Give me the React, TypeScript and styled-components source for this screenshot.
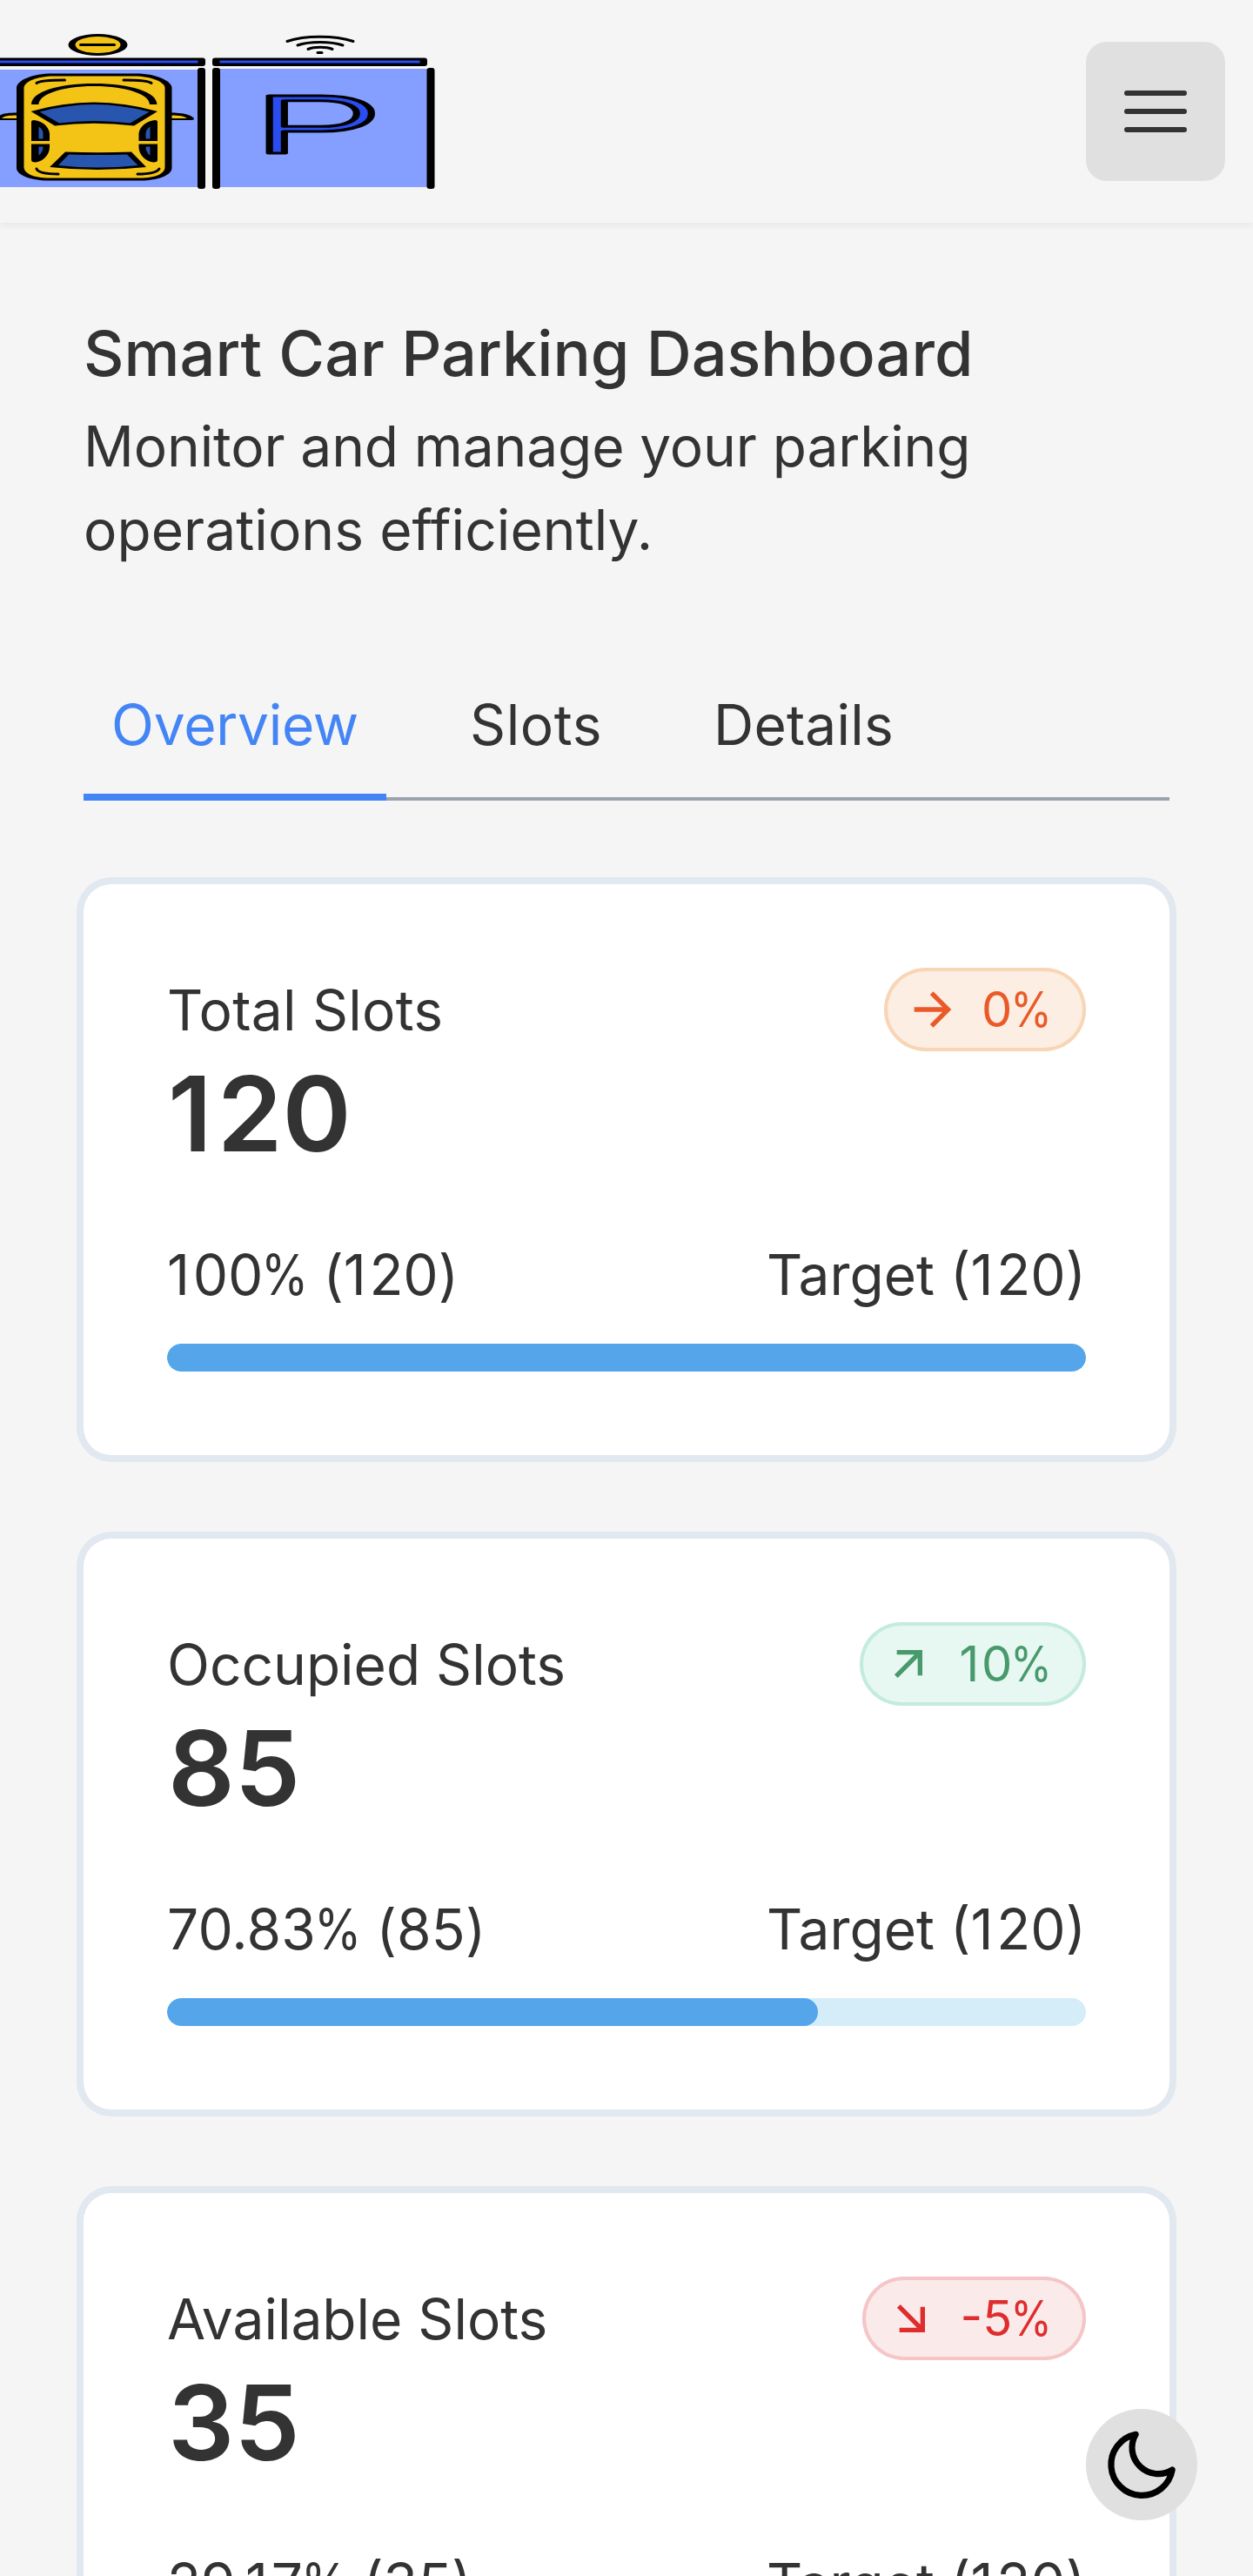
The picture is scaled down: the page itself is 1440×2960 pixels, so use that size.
import React from "react";
import styled, { createGlobalStyle } from "styled-components";

const GlobalStyle = createGlobalStyle`
  *, *::before, *::after { box-sizing: border-box; }
  body { margin: 0; background: #f5f5f5; color: #333333; font-family: Inter, sans-serif; font-size: 64px; line-height: 96px; }
  h1, p, button { margin: 0; padding: 0; font: inherit; color: inherit; }
  button { border: 0; background: none; }
`;

const Page = styled.div`
  height: 2960px;
  overflow: hidden;
`;

const Header = styled.header`
  display: flex;
  align-items: center;
  justify-content: space-between;
  height: 256px;
  padding-right: 32px;
  box-shadow: 0 4px 8px rgba(0, 0, 0, 0.05);
`;

const Logo = styled.svg`
  display: block;
  width: 520px;
  height: 256px;
`;

const LogoLetter = styled.text`
  font-family: Inter, sans-serif;
  font-size: 91px;
  font-weight: 300;
  fill: #2a4df2;
  stroke: #000000;
  stroke-width: 3px;
  stroke-linejoin: round;
`;

const MenuButton = styled.button`
  display: flex;
  align-items: center;
  justify-content: center;
  width: 160px;
  height: 160px;
  border-radius: 24px;
  background: #e0e0e0;
`;

const MenuIcon = styled.svg`
  width: 96px;
  height: 96px;
  fill: none;
  stroke: #333333;
  stroke-width: 1.5;
  stroke-linecap: round;
`;

const Main = styled.main`
  padding: 96px;
`;

const Title = styled.h1`
  font-size: 72px;
  line-height: 108px;
  font-weight: 500;
  letter-spacing: 0.03px;
  margin-bottom: 4px;
`;

const BodyText = styled.p`
  padding-top: 1px;
  margin-bottom: -1px;
`;

const Subtitle = styled(BodyText)`
  letter-spacing: 0.08px;

  &::first-line {
    letter-spacing: -0.12px;
  }
`;

const Tabs = styled.nav`
  display: flex;
  gap: 64px;
  height: 168px;
  margin: 96px 0;
  box-shadow: inset 0 -4px 0 #9ca3af;
`;

const Tab = styled.button<{ $active?: boolean; $tracking: number }>`
  padding: 33px 32px 31px;
  border-bottom: 8px solid ${(p) => (p.$active ? "#4485f6" : "transparent")};
  color: ${(p) => (p.$active ? "#4485f6" : "#333333")};
  letter-spacing: ${(p) => p.$tracking}px;
`;

const Cards = styled.section`
  display: flex;
  flex-direction: column;
  gap: 96px;
`;

const Card = styled.article`
  padding: 96px;
  border-radius: 32px;
  background: #ffffff;
  box-shadow: 0 0 0 8px #e1e8f0;
`;

const Row = styled.div`
  display: flex;
  align-items: center;
  justify-content: space-between;
`;

const Label = styled(BodyText)<{ $tracking?: number }>`
  white-space: pre;
  letter-spacing: ${(p) => p.$tracking ?? 0}px;
`;

const Value = styled.p`
  font-size: 120px;
  line-height: 144px;
  font-weight: 600;
  padding-left: 1px;
  margin-bottom: 64px;
`;

type Tone = "flat" | "up" | "down";

const tones: Record<Tone, { text: string; fill: string; ring: string; path: string }> = {
  flat: {
    text: "#ea5a28",
    fill: "#fceee2",
    ring: "#f8d5b6",
    path: "M16.172 11L10.808 5.636L12.222 4.222L20 12L12.222 19.778L10.808 18.364L16.172 13H4V11H16.172Z",
  },
  up: {
    text: "#479a6b",
    fill: "#e7f7f2",
    ring: "#c3ecdc",
    path: "M16.004 9.414L7.397 18.021L5.983 16.607L14.589 8H7.004V6H18.004V17H16.004V9.414Z",
  },
  down: {
    text: "#df2c2c",
    fill: "#fbeaea",
    ring: "#f5c5c8",
    path: "M14.589 16.004L5.983 7.397L7.397 5.983L16.004 14.589V7.004H18.004V18.004H7.004V16.004H14.589Z",
  },
};

const Badge = styled.span<{ $tone: Tone }>`
  display: flex;
  align-items: center;
  gap: 24px;
  padding: 8px 40px 8px 24px;
  border-radius: 48px;
  font-size: 56px;
  line-height: 80px;
  color: ${(p) => tones[p.$tone].text};
  background: ${(p) => tones[p.$tone].fill};
  box-shadow: inset 0 0 0 4px ${(p) => tones[p.$tone].ring};
`;

const BadgeIcon = styled.svg`
  width: 64px;
  height: 64px;
  fill: currentColor;
`;

/* Even figure spacing: the narrow "1" gets side room, the wide "%" is condensed. */
const One = styled.span<{ $before: number; $after: number }>`
  margin: 0 ${(p) => p.$after}em 0 ${(p) => p.$before}em;
`;

const Percent = styled.span`
  display: inline-block;
  width: 0.8em;
  transform: translateX(-0.03em) scaleX(0.865);
  transform-origin: 0 50%;
`;

const Figures = ({ text, before = 0, after = 0.06 }: { text: string; before?: number; after?: number }) => (
  <span>
    {text.split(/([1%])/).map((part, i) => {
      if (part === "1")
        return (
          <One key={i} $before={before} $after={after}>
            1
          </One>
        );
      if (part === "%") return <Percent key={i}>%</Percent>;
      return part;
    })}
  </span>
);

const Track = styled.div`
  height: 32px;
  margin-top: 32px;
  border-radius: 16px;
  background: #d4edf9;
  overflow: hidden;
`;

const Fill = styled.div`
  height: 100%;
  border-radius: 16px;
  background: #54a5ea;
`;

const ThemeButton = styled.button`
  position: fixed;
  right: 64px;
  bottom: 64px;
  display: flex;
  align-items: center;
  justify-content: center;
  width: 128px;
  height: 128px;
  border-radius: 50%;
  background: #e0e0e0;
`;

const MoonIcon = styled.svg`
  width: 96px;
  height: 96px;
  fill: none;
  stroke: #000000;
  stroke-width: 1.8;
  stroke-linejoin: round;
`;

const ParkingLogo = () => (
  <Logo viewBox="0 0 520 256" stroke="#000" strokeWidth="3">
    <g stroke="none">
      <rect x="0" y="80" width="228" height="135" fill="#849fff" />
      <rect x="252" y="79" width="240" height="136" fill="#849fff" />
      <rect x="-10" y="66.500" width="246" height="9.500" rx="3" />
      <rect x="244" y="66.500" width="247" height="9.500" rx="3" />
      <rect x="-10" y="69.500" width="237.500" height="3" fill="#2a4df2" />
      <rect x="252.500" y="69.500" width="230" height="3" fill="#2a4df2" />
      <rect x="227" y="78" width="9" height="139" rx="3" />
      <rect x="244" y="78" width="9" height="139" rx="3" />
      <rect x="490.500" y="78" width="9" height="139" rx="3" />
      <ellipse cx="112.500" cy="51.500" rx="34" ry="12.500" />
      <ellipse cx="112.500" cy="51.500" rx="26" ry="9.500" fill="#f3c416" />
      <rect x="91" y="50" width="42" height="3" rx="1.500" />
      <path d="M-2 138V134C2 130.500 8 129.500 20 129.500V138Z" />
      <path d="M2 136C5 133 10 132.500 20 132.500V136Z" fill="#f3c416" />
      <path d="M196 129.500C209 129.500 219 131.500 223 136C223 138 221 138 219 138H196Z" />
      <path d="M196 132.500C206 132.500 212 133.500 215 136H196Z" fill="#f3c416" />
      <path d="M60 84.500H156C182 84.500 197.500 94 197.500 101V193C197.500 201 182 207.500 162 207.500H55C35 207.500 19 201 19 193V101C19 92 38 84.500 60 84.500Z" />
      <path d="M62 87.500H154C174 87.500 189.500 94.500 189.500 101V192C189.500 199 180 204.500 160 204.500H57C38 204.500 27.500 199 27.500 192V101C27.500 94 42 87.500 62 87.500Z" fill="#f3c416" />
      <path d="M36 120C36 106 65 96 108 96S180.500 106 180.500 120H172C172 109 147 99 108 99S44.500 109 44.500 120Z" />
      <path d="M36 140Q36 138 39 138C50 139 57 147 57 154V162H36ZM36 165.500H57V169C57 178 50 185 41 186.500Q36 186.500 36 184Z" />
      <path d="M181 140Q181 138 178 138C167 139 159.500 147 159.500 154V162H181ZM181 165.500H159.500V169C159.500 178 167 185 176 186.500Q181 186.500 181 184Z" />
      <path
        d="M44.500 145.500Q49.500 149 49.500 153V159.500H44.500ZM44.500 168.500H49.500Q49.500 175 44.500 178.500ZM172.500 145.500Q167.500 149 167.500 153V159.500H172.500ZM172.500 168.500H167.500Q167.500 175 172.500 178.500Z"
        fill="#2855ad"
      />
    </g>
    <g fill="none" strokeLinecap="round">
      <path d="M42 95.500C45 93 53 92 74.500 92M174 95.500C171 93 161 92 142 92" />
      <path d="M42 194C44 199 54 200 67 200M183 194C180 199 170 200 158 200" />
      <path d="M330 47.500C350 40.500 385 40.500 406 47.500M342 52C355 47.300 380 47.300 394 52M354 56.500C361 53.500 375 53.500 382 56.500M365 60.500H370" />
    </g>
    <g stroke="none">
      <path d="M35.500 128Q108 107 181 128L154 144.500Q108 139 63 144.500Z" />
      <path d="M45.500 128.500Q108 111.500 171.500 128.500L149.500 141.500Q108 136.500 68 141.500Z" fill="#2855ad" />
      <path d="M75 174.500Q113 176 151 174.500L168 192Q112 198 57 192Z" />
      <path d="M79 177.500Q113 178.500 146 177.500L158.500 190Q112 195 67 190Z" fill="#2855ad" />
    </g>
    <LogoLetter transform="translate(285.800 176) scale(2.730 1)">P</LogoLetter>
  </Logo>
);

type Stat = { label: string; tracking?: number; value: string; change: string; tone: Tone; percent: number; shareTracking?: number };

const cards: Stat[] = [
  { label: "Total Slots", tracking: 0.26, value: "120", change: "0%", tone: "flat", percent: 100, shareTracking: -0.1 },
  { label: "Occupied Slots", value: "85", change: "10%", tone: "up", percent: 70.83, shareTracking: 0.2 },
  { label: "Available Slots", value: "35", change: "-5%", tone: "down", percent: 29.17 },
];

export default function App() {
  return (
    <Page>
      <GlobalStyle />
      <Header>
        <ParkingLogo />
        <MenuButton aria-label="Open menu">
          <MenuIcon viewBox="0 0 24 24">
            <path d="M3.750 6.750h16.500M3.750 12h16.500M3.750 17.250h16.500" />
          </MenuIcon>
        </MenuButton>
      </Header>
      <Main>
        <Title>Smart Car Parking Dashboard</Title>
        <Subtitle>Monitor and manage your parking operations efficiently.</Subtitle>
        <Tabs>
          <Tab $active $tracking={-0.26}>
            Overview
          </Tab>
          <Tab $tracking={0.6}>Slots</Tab>
          <Tab $tracking={0.2}>Details</Tab>
        </Tabs>
        <Cards>
          {cards.map((c) => (
            <Card key={c.label}>
              <Row>
                <Label $tracking={c.tracking}>{c.label}</Label>
                <Badge $tone={c.tone}>
                  <BadgeIcon viewBox="0 0 24 24">
                    <path d={tones[c.tone].path} />
                  </BadgeIcon>
                  <Figures text={c.change} before={0.046} after={0.046} />
                </Badge>
              </Row>
              <Value>
                <Figures text={c.value} after={0.05} />
              </Value>
              <Row>
                <Label $tracking={c.shareTracking}>
                  <Figures text={`${c.percent}% (${c.value})`} />
                </Label>
                <Label>
                  <Figures text="Target (120)" />
                </Label>
              </Row>
              <Track>
                <Fill style={{ width: `${c.percent}%` }} />
              </Track>
            </Card>
          ))}
        </Cards>
      </Main>
      <ThemeButton aria-label="Toggle dark mode">
        <MoonIcon viewBox="0 0 24 24">
          <path d="M20.800 13.500A8.850 8.850 0 1 1 10.300 3.320A7.520 7.520 0 0 0 20.800 13.500Z" />
        </MoonIcon>
      </ThemeButton>
    </Page>
  );
}
